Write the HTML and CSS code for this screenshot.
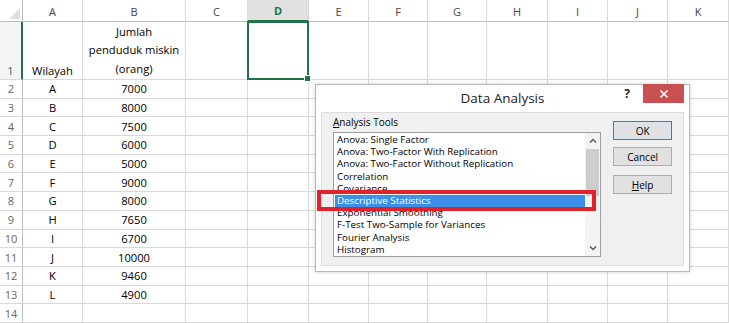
FILE: index.html
```html
<!DOCTYPE html>
<html>
<head>
<meta charset="utf-8">
<link rel="stylesheet" href="styles.css">
</head>
<body>
<div class="page">
  <div class="sheet">
    <div class="corner"><span class="tri"></span></div>
    <div class="ch">A</div><div class="ch">B</div><div class="ch">C</div><div class="ch sel">D</div><div class="ch">E</div><div class="ch">F</div><div class="ch">G</div><div class="ch">H</div><div class="ch">I</div><div class="ch">J</div><div class="ch">K</div>

    <div class="rh rsel">1</div><div class="c bot">Wilayah</div><div class="c bot wrap">Jumlah<br>penduduk miskin<br>(orang)</div><div class="c"></div><div class="c"></div><div class="c"></div><div class="c"></div><div class="c"></div><div class="c"></div><div class="c"></div><div class="c"></div><div class="c"></div>

    <div class="rh">2</div><div class="c">A</div><div class="c">7000</div><div class="c"></div><div class="c"></div><div class="c"></div><div class="c"></div><div class="c"></div><div class="c"></div><div class="c"></div><div class="c"></div><div class="c"></div>
    <div class="rh">3</div><div class="c">B</div><div class="c">8000</div><div class="c"></div><div class="c"></div><div class="c"></div><div class="c"></div><div class="c"></div><div class="c"></div><div class="c"></div><div class="c"></div><div class="c"></div>
    <div class="rh">4</div><div class="c">C</div><div class="c">7500</div><div class="c"></div><div class="c"></div><div class="c"></div><div class="c"></div><div class="c"></div><div class="c"></div><div class="c"></div><div class="c"></div><div class="c"></div>
    <div class="rh">5</div><div class="c">D</div><div class="c">6000</div><div class="c"></div><div class="c"></div><div class="c"></div><div class="c"></div><div class="c"></div><div class="c"></div><div class="c"></div><div class="c"></div><div class="c"></div>
    <div class="rh">6</div><div class="c">E</div><div class="c">5000</div><div class="c"></div><div class="c"></div><div class="c"></div><div class="c"></div><div class="c"></div><div class="c"></div><div class="c"></div><div class="c"></div><div class="c"></div>
    <div class="rh">7</div><div class="c">F</div><div class="c">9000</div><div class="c"></div><div class="c"></div><div class="c"></div><div class="c"></div><div class="c"></div><div class="c"></div><div class="c"></div><div class="c"></div><div class="c"></div>
    <div class="rh">8</div><div class="c">G</div><div class="c">8000</div><div class="c"></div><div class="c"></div><div class="c"></div><div class="c"></div><div class="c"></div><div class="c"></div><div class="c"></div><div class="c"></div><div class="c"></div>
    <div class="rh">9</div><div class="c">H</div><div class="c">7650</div><div class="c"></div><div class="c"></div><div class="c"></div><div class="c"></div><div class="c"></div><div class="c"></div><div class="c"></div><div class="c"></div><div class="c"></div>
    <div class="rh">10</div><div class="c">I</div><div class="c">6700</div><div class="c"></div><div class="c"></div><div class="c"></div><div class="c"></div><div class="c"></div><div class="c"></div><div class="c"></div><div class="c"></div><div class="c"></div>
    <div class="rh">11</div><div class="c">J</div><div class="c">10000</div><div class="c"></div><div class="c"></div><div class="c"></div><div class="c"></div><div class="c"></div><div class="c"></div><div class="c"></div><div class="c"></div><div class="c"></div>
    <div class="rh">12</div><div class="c">K</div><div class="c">9460</div><div class="c"></div><div class="c"></div><div class="c"></div><div class="c"></div><div class="c"></div><div class="c"></div><div class="c"></div><div class="c"></div><div class="c"></div>
    <div class="rh">13</div><div class="c">L</div><div class="c">4900</div><div class="c"></div><div class="c"></div><div class="c"></div><div class="c"></div><div class="c"></div><div class="c"></div><div class="c"></div><div class="c"></div><div class="c"></div>
    <div class="rh">14</div><div class="c"></div><div class="c"></div><div class="c"></div><div class="c"></div><div class="c"></div><div class="c"></div><div class="c"></div><div class="c"></div><div class="c"></div><div class="c"></div><div class="c"></div>
  </div>

  <div class="selbox"><span class="handle"></span></div>

  <div class="dialog">
    <div class="titlebar">
      <div class="title">Data Analysis</div>
      <div class="controls">
        <span class="qmark">?</span>
        <span class="close">
          <svg width="10" height="10" viewBox="0 0 10 10"><path d="M1.5 1.5 L8.5 8.5 M8.5 1.5 L1.5 8.5" stroke="#fff" stroke-width="1.6" fill="none"/></svg>
        </span>
      </div>
    </div>
    <div class="client">
      <div class="tools">
        <div class="label"><u>A</u>nalysis Tools</div>
        <div class="listbox">
          <ul class="items">
            <li>Anova: Single Factor</li>
            <li>Anova: Two-Factor With Replication</li>
            <li>Anova: Two-Factor Without Replication</li>
            <li>Correlation</li>
            <li>Covariance</li>
            <li class="hl">Descriptive Statistics</li>
            <li>Exponential Smoothing</li>
            <li>F-Test Two-Sample for Variances</li>
            <li>Fourier Analysis</li>
            <li>Histogram</li>
          </ul>
          <div class="scroll">
            <div class="arrow">
              <svg width="8" height="6" viewBox="0 0 8 6"><path d="M1 4.5 L4 1.5 L7 4.5" stroke="#555" stroke-width="1.4" fill="none"/></svg>
            </div>
            <div class="thumb"></div>
            <div class="track"></div>
            <div class="arrow">
              <svg width="8" height="6" viewBox="0 0 8 6"><path d="M1 1.5 L4 4.5 L7 1.5" stroke="#555" stroke-width="1.4" fill="none"/></svg>
            </div>
          </div>
        </div>
      </div>
      <div class="buttons">
        <div class="btn default">OK</div>
        <div class="btn">Cancel</div>
        <div class="btn help"><u>H</u>elp</div>
      </div>
    </div>
  </div>

  <div class="annot"></div>
</div>
</body>
</html>
```
FILE: styles.css
```css
html, body {
  margin: 0;
  padding: 0;
  background: #fff;
  overflow: hidden;
}

.page {
  position: relative;
  width: 729px;
  height: 323px;
  overflow: hidden;
  font-family: "Open Sans", "Noto Sans", sans-serif;
}

.sheet {
  display: grid;
  grid-template-columns: 23px 60px 103px 62px 61px 60px 59px 59px 61px 60px 60px 61px;
  grid-template-rows: 22px 58px repeat(13, 18.7px);
  font-size: 11.2px;
  color: #000;
}

.sheet > div {
  box-sizing: border-box;
  border-right: 1px solid #d9d9d9;
  border-bottom: 1px solid #d9d9d9;
  display: flex;
  align-items: center;
  justify-content: center;
  overflow: hidden;
  white-space: nowrap;
}

.corner {
  background: #fff;
  position: relative;
  border-right-color: #bdbdbd !important;
  border-bottom-color: #bdbdbd !important;
}

.tri {
  position: absolute;
  right: 2px;
  bottom: 2px;
  width: 0;
  height: 0;
  border-left: 11px solid transparent;
  border-bottom: 11px solid #dfdfdf;
}

.ch {
  background: #fff;
  color: #444;
  font-size: 11px;
  border-bottom-color: #bdbdbd !important;
  padding-top: 1px;
}

.ch.sel {
  background: #e1e1e1;
  color: #217346;
  font-weight: 700;
  border-bottom: 2px solid #217346 !important;
}

.rh {
  background: #fff;
  color: #666;
  font-size: 11px;
  border-right-color: #bdbdbd !important;
}

.rh.rsel {
  align-items: flex-end;
  color: #217346;
  border-right: 2px solid #217346 !important;
  padding-bottom: 1px;
  background: #f4f4f4;
}

.c.bot {
  align-items: flex-end;
  padding-bottom: 1px;
}

.c.wrap {
  white-space: normal;
  text-align: center;
  line-height: 18.5px;
}

.selbox {
  position: absolute;
  left: 247px;
  top: 21px;
  width: 62px;
  height: 59px;
  box-sizing: border-box;
  border: 2px solid #217346;
}

.handle {
  position: absolute;
  right: -4px;
  bottom: -4px;
  width: 5px;
  height: 5px;
  background: #217346;
  border: 1px solid #fff;
}

/* dialog */
.dialog {
  position: absolute;
  left: 315px;
  top: 84px;
  width: 375px;
  height: 188px;
  box-sizing: border-box;
  background: #fff;
  border: 1px solid #b9b9b9;
  box-shadow: 0 0 4px rgba(0,0,0,0.18);
  display: flex;
  flex-direction: column;
}

.titlebar {
  position: relative;
  height: 27px;
  flex: none;
}

.title {
  text-align: center;
  font-size: 13.5px;
  line-height: 27px;
  color: #222;
}

.controls {
  position: absolute;
  right: 5px;
  top: -1px;
  display: flex;
  align-items: flex-start;
}

.qmark {
  font-size: 12px;
  font-weight: 700;
  color: #222;
  width: 24px;
  text-align: center;
  line-height: 20px;
  margin-right: 4px;
}

.close {
  width: 41px;
  height: 19px;
  background: #c75050;
  display: flex;
  align-items: center;
  justify-content: center;
}

.client {
  flex: 1;
  margin: 0 5px 5px 5px;
  background: #f0f0f0;
  border: 1px solid #dcdcdc;
  display: flex;
  padding: 0 11px 0 11px;
  gap: 12px;
}

.tools {
  display: flex;
  flex-direction: column;
  width: 269px;
}

.label {
  font-size: 10px;
  line-height: 13px;
  margin-top: 3px;
  height: 16px;
  color: #000;
}

.listbox {
  height: 125px;
  box-sizing: border-box;
  border: 1px solid #a0a0a0;
  background: #fff;
  display: flex;
}

.items {
  list-style: none;
  margin: 0;
  padding: 1px 0 0 1px;
  flex: 1;
  overflow: hidden;
}

.items li {
  font-size: 9.8px;
  height: 12.2px;
  line-height: 12.2px;
  padding-left: 2px;
  color: #000;
  white-space: nowrap;
}

.items li.hl {
  background: #3b8fe9;
  color: #fff;
}

.scroll {
  width: 15px;
  flex: none;
  display: flex;
  flex-direction: column;
  background: #f3f3f3;
}

.arrow {
  height: 16px;
  display: flex;
  align-items: center;
  justify-content: center;
}

.thumb {
  height: 47px;
  background: #cdcdcd;
  margin: 0 1px;
}

.track {
  flex: 1;
}

.buttons {
  display: flex;
  flex-direction: column;
  width: 59px;
  padding-top: 8px;
}

.btn {
  height: 19px;
  box-sizing: border-box;
  border: 1px solid #adadad;
  background: #e1e1e1;
  font-size: 10px;
  display: flex;
  align-items: center;
  justify-content: center;
  color: #000;
}

.btn.default {
  border-color: #3c7fb1;
  box-shadow: inset 0 0 0 1px #d6e8f6;
}

.btn + .btn {
  margin-top: 7px;
}

.btn.help {
  margin-top: 9px;
}

.annot {
  position: absolute;
  left: 317px;
  top: 190px;
  width: 279px;
  height: 21px;
  box-sizing: border-box;
  border: 4px solid #e0222c;
}
```
